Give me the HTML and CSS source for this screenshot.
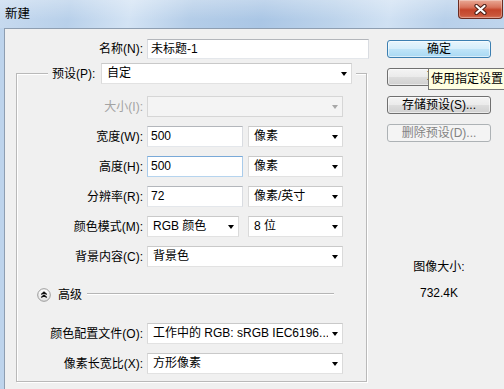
FILE: index.html
```html
<!DOCTYPE html>
<html lang="zh-CN">
<head>
<meta charset="utf-8">
<title>新建</title>
<link rel="stylesheet" href="styles.css">
</head>
<body>
<div class="window">
  <div class="titlebar">
    <span class="title">新建</span>
    <div class="close">
      <svg width="15" height="11" viewBox="0 0 15 11">
        <path d="M3.5 2 L11.5 9 M11.5 2 L3.5 9" stroke="#4a1d15" stroke-width="4.2" stroke-linecap="round" fill="none"/>
        <path d="M3.5 2 L11.5 9 M11.5 2 L3.5 9" stroke="#ffffff" stroke-width="2.2" stroke-linecap="round" fill="none"/>
      </svg>
    </div>
  </div>
  <div class="frame">
    <div class="client">
      <div class="main">
        <div class="row top-row">
          <span class="lbl">名称(N):</span>
          <div class="field name">未标题-1</div>
        </div>
        <fieldset class="group">
          <legend class="preset">
            <span class="preset-lbl">预设(P):</span>
            <div class="select preset-sel"><span>自定</span><i class="arrow"></i></div>
          </legend>
          <div class="rows">
            <div class="row">
              <span class="lbl dis">大小(I):</span>
              <div class="select disabled w-full"><span></span><i class="arrow"></i></div>
            </div>
            <div class="row">
              <span class="lbl">宽度(W):</span>
              <div class="field w-num">500</div>
              <div class="select w-unit"><span>像素</span><i class="arrow"></i></div>
            </div>
            <div class="row">
              <span class="lbl">高度(H):</span>
              <div class="field w-num focus">500</div>
              <div class="select w-unit"><span>像素</span><i class="arrow"></i></div>
            </div>
            <div class="row">
              <span class="lbl">分辨率(R):</span>
              <div class="field w-num">72</div>
              <div class="select w-unit"><span>像素/英寸</span><i class="arrow"></i></div>
            </div>
            <div class="row">
              <span class="lbl">颜色模式(M):</span>
              <div class="select w-mode"><span>RGB 颜色</span><i class="arrow"></i></div>
              <div class="select w-unit"><span>8 位</span><i class="arrow"></i></div>
            </div>
            <div class="row">
              <span class="lbl">背景内容(C):</span>
              <div class="select w-full"><span>背景色</span><i class="arrow"></i></div>
            </div>
          </div>
          <div class="adv">
            <svg class="adv-icon" width="14" height="14" viewBox="0 0 14 14">
              <defs>
                <linearGradient id="g" x1="0" y1="0" x2="0" y2="1">
                  <stop offset="0" stop-color="#ffffff"/>
                  <stop offset="1" stop-color="#e2e2e2"/>
                </linearGradient>
              </defs>
              <circle cx="7" cy="7" r="6.3" fill="url(#g)" stroke="#9a9a9a" stroke-width="1"/>
              <path d="M4.3 6.6 L7 4.2 L9.7 6.6 M4.3 9.6 L7 7.2 L9.7 9.6" stroke="#111" stroke-width="1.3" fill="none"/>
            </svg>
            <span class="adv-text">高级</span>
            <span class="adv-line"></span>
          </div>
          <div class="rows">
            <div class="row">
              <span class="lbl">颜色配置文件(O):</span>
              <div class="select w-full"><span class="clip">工作中的 RGB: sRGB IEC6196...</span><i class="arrow"></i></div>
            </div>
            <div class="row">
              <span class="lbl">像素长宽比(X):</span>
              <div class="select w-full"><span>方形像素</span><i class="arrow"></i></div>
            </div>
          </div>
        </fieldset>
      </div>
      <div class="side">
        <div class="btn default">确定</div>
        <div class="btn">取消</div>
        <div class="btn">存储预设(S)...</div>
        <div class="btn disabled">删除预设(D)...</div>
        <div class="info">
          <div>图像大小:</div>
          <div class="size-val">732.4K</div>
        </div>
        <div class="tooltip">使用指定设置</div>
      </div>
    </div>
  </div>
</div>
</body>
</html>
```

FILE: styles.css
```css
* {
  box-sizing: border-box;
}

html,
body {
  margin: 0;
  padding: 0;
}

body {
  width: 504px;
  height: 389px;
  overflow: hidden;
  font-family: "Liberation Sans", "Noto Sans CJK SC", sans-serif;
  font-size: 12px;
  line-height: 16px;
  color: #000;
  background: #f0f0f0;
}

.window {
  width: 504px;
  height: 389px;
  display: flex;
  flex-direction: column;
}

.titlebar {
  height: 28px;
  flex: none;
  display: flex;
  justify-content: space-between;
  align-items: flex-start;
  background:
    linear-gradient(180deg, rgba(255, 255, 255, 0.28), rgba(255, 255, 255, 0) 70%),
    linear-gradient(100deg, #c7daef 0%, #b8d0ea 14%, #d3e3f4 26%, #b4cde8 38%, #aac6e5 52%, #bcd3eb 66%, #d0e1f3 77%, #b8d0ea 88%, #bfd5ed 100%);
}

.title {
  padding: 6px 0 0 5px;
  font-size: 12.5px;
  line-height: 16px;
}

.close {
  width: 45px;
  height: 19px;
  margin-right: 1px;
  border: 1px solid #6a2c22;
  border-top: none;
  border-radius: 0 0 4px 4px;
  background: linear-gradient(180deg, #eaa996 0%, #d8735c 40%, #c4442a 55%, #c9553a 85%, #d8765c 100%);
  box-shadow: inset 0 0 0 1px rgba(255, 255, 255, 0.3);
  display: flex;
  align-items: center;
  justify-content: center;
}

.frame {
  flex: 1;
  display: flex;
  border-left: 4px solid #bed4ec;
}

.client {
  flex: 1;
  display: flex;
  background: #f0f0f0;
  border-left: 1px solid #8e9eb1;
  border-top: 1px solid #8e9eb1;
}

.main {
  width: 364px;
  flex: none;
  padding-top: 10px;
}

.row {
  display: flex;
  align-items: center;
  height: 21px;
}

.top-row {
  height: 20px;
}

.lbl {
  flex: none;
  text-align: right;
  padding-right: 4px;
  white-space: nowrap;
}

.top-row .lbl {
  width: 142px;
}

.group .lbl {
  width: 130px;
}

.lbl.dis {
  color: #a3a3a3;
}

.field {
  height: 21px;
  border: 1px solid;
  border-color: #b3b6bb #d9dce1 #e4e7eb #d9dce1;
  background: #fff;
  padding: 0 3px;
  line-height: 19px;
  white-space: nowrap;
}

.field.name {
  width: 222px;
  height: 20px;
  line-height: 18px;
}

.field.focus {
  border-color: #79a9d8 #a9cbea #b6d4ee #a9cbea;
}

.select {
  display: flex;
  align-items: center;
  justify-content: space-between;
  height: 21px;
  background: #fff;
  border: 1px solid;
  border-color: #c9c9c9 #dadada #e2e2e2 #dadada;
  padding: 0 4px 0 5px;
  line-height: 19px;
  white-space: nowrap;
  overflow: hidden;
}

.select.disabled {
  background: #f4f4f4;
  border-color: #d6d6d6;
}

.select.disabled .arrow {
  border-top-color: #a8a8a8;
}

.clip {
  overflow: hidden;
}

.arrow {
  flex: none;
  width: 0;
  height: 0;
  margin-left: 4px;
  border-left: 3.5px solid transparent;
  border-right: 3.5px solid transparent;
  border-top: 4px solid #000;
}

.w-full {
  width: 196px;
}

.w-num {
  width: 96px;
  margin-right: 5px;
}

.w-unit {
  width: 95px;
}

.w-mode {
  width: 92px;
  margin-right: 9px;
}

.group {
  margin: 4px 0 0 11px;
  width: 351px;
  min-width: 0;
  padding: 12px 0 7px 0;
  border: 1px solid #b9b9b9;
  box-shadow: inset 1px 1px 0 #fff, 1px 1px 0 #fff;
}

.preset {
  margin-left: 31px;
  padding: 0 4px;
  height: 21px;
  display: flex;
  align-items: center;
  background: #f0f0f0;
}

.preset-lbl {
  width: 45px;
  margin-right: 4px;
  white-space: nowrap;
}

.preset-sel {
  width: 251px;
}

.rows {
  display: flex;
  flex-direction: column;
  gap: 9px;
}

.adv {
  display: flex;
  align-items: center;
  height: 14px;
  margin: 21px 32px 21px 20px;
}

.adv-icon {
  flex: none;
  display: block;
}

.adv-text {
  margin-left: 7px;
  white-space: nowrap;
}

.adv-line {
  flex: 1;
  margin-left: 5px;
  margin-top: -2px;
  border-top: 1px solid #b5b5b5;
  border-bottom: 1px solid #fff;
}

.side {
  flex: 1;
  position: relative;
  padding: 11px 0 0 18px;
  display: flex;
  flex-direction: column;
}

.btn {
  flex: none;
  width: 104px;
  height: 18px;
  margin-bottom: 10px;
  border: 1px solid #707070;
  border-radius: 3px;
  background: linear-gradient(180deg, #f4f4f4 0%, #ebebeb 48%, #dddddd 52%, #d0d0d0 100%);
  box-shadow: inset 0 0 0 1px rgba(255, 255, 255, 0.55);
  text-align: center;
  line-height: 16px;
  white-space: nowrap;
}

.btn.default {
  border-color: #3c7fb1;
  background: linear-gradient(180deg, #e8f5fc 0%, #d6eefb 48%, #bfe4f8 52%, #a9d9f3 100%);
}

.btn.disabled {
  border-color: #adb2b5;
  background: #f4f4f4;
  box-shadow: none;
  color: #838383;
}

.info {
  width: 104px;
  margin-top: 107px;
  text-align: center;
  line-height: 16px;
}

.size-val {
  margin-top: 10px;
}

.tooltip {
  position: absolute;
  left: 59px;
  top: 39px;
  height: 22px;
  padding: 0 2px;
  border: 1px solid #767676;
  background: #ffffe1;
  line-height: 20px;
  white-space: nowrap;
}
```
